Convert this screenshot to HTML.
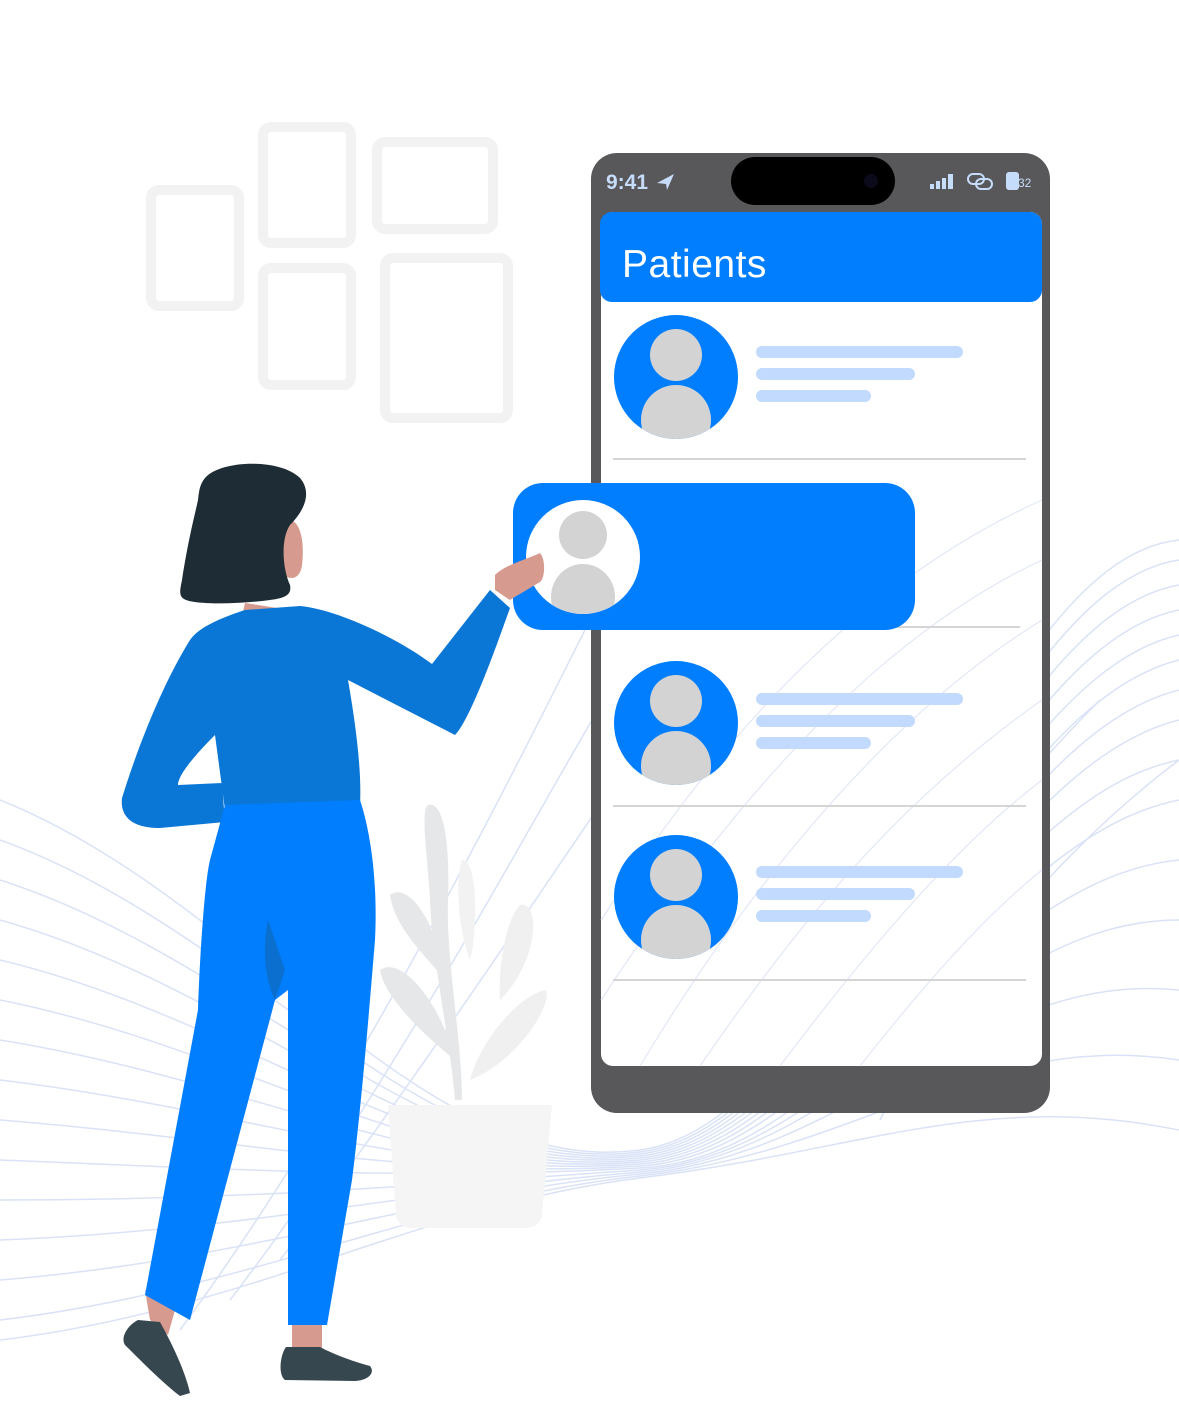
<!DOCTYPE html>
<html><head><meta charset="utf-8"><style>
html,body{margin:0;padding:0;background:#fff;width:1179px;height:1420px;overflow:hidden}
svg{display:block}
</style></head><body>
<svg width="1179" height="1420" viewBox="0 0 1179 1420" xmlns="http://www.w3.org/2000/svg">
<g fill="none" stroke="#f2f2f2" stroke-width="10">
<rect x="151" y="190" width="88" height="116" rx="8"/>
<rect x="263" y="127" width="88" height="116" rx="8"/>
<rect x="377" y="142" width="116" height="87" rx="8"/>
<rect x="263" y="268" width="88" height="117" rx="8"/>
<rect x="385" y="258" width="123" height="160" rx="8"/>
</g>
<g fill="none" stroke="#d3ddf5" stroke-width="1.5" opacity="0.85">
<path d="M0,800 C250,900 420,1180 640,1150 S980,560 1179,540"/>
<path d="M0,840 C250,930 420,1180 640,1152 S980,590 1179,560"/>
<path d="M0,880 C250,960 420,1180 640,1154 S980,620 1179,585"/>
<path d="M0,920 C250,990 420,1180 640,1156 S980,650 1179,610"/>
<path d="M0,960 C250,1020 420,1180 640,1158 S980,680 1179,635"/>
<path d="M0,1000 C250,1050 420,1180 640,1160 S980,710 1179,660"/>
<path d="M0,1040 C250,1080 420,1180 640,1162 S980,740 1179,690"/>
<path d="M0,1080 C250,1110 420,1180 640,1164 S980,770 1179,720"/>
<path d="M0,1120 C250,1140 420,1180 640,1166 S980,800 1179,760"/>
<path d="M0,1160 C250,1170 420,1180 640,1168 S980,840 1179,800"/>
<path d="M0,1200 C250,1200 420,1185 640,1170 S980,880 1179,860"/>
<path d="M0,1240 C250,1230 420,1190 640,1172 S980,920 1179,920"/>
<path d="M0,1280 C250,1260 420,1195 640,1174 S980,970 1179,990"/>
<path d="M0,1320 C250,1290 420,1200 640,1176 S980,1030 1179,1060"/>
<path d="M0,1340 C250,1310 420,1205 640,1178 S980,1090 1179,1130"/>
<path d="M180,1330 C350,1100 500,800 600,600"/>
<path d="M230,1300 C400,1080 540,800 640,640"/>
<path d="M280,1260 C440,1050 600,800 700,660"/>
<path d="M760,1080 C850,900 950,760 1050,660"/>
<path d="M820,1100 C900,930 1000,800 1100,700"/>
<path d="M880,1120 C950,980 1060,850 1179,760"/>
<path d="M700,1060 C800,880 900,720 1000,620"/>
<path d="M640,1040 C740,860 850,690 960,590"/>
</g>
<g fill="#e6e7e9">
<path d="M428,805 C445,800 450,850 448,900 C446,960 462,1040 462,1100 L455,1100 C450,1040 432,960 430,900 C428,860 420,810 428,805Z"/>
<path d="M390,895 C410,880 440,930 445,980 C430,960 395,930 390,895Z"/>
<path d="M380,970 C400,955 440,1000 455,1060 C430,1040 385,1000 380,970Z"/>
<path d="M520,905 C540,900 540,960 500,1000 C498,970 505,920 520,905Z" fill="#f0f0f1"/>
<path d="M545,990 C555,1000 520,1060 470,1080 C480,1040 520,995 545,990Z" fill="#f0f0f1"/>
<path d="M462,860 C478,860 478,930 470,960 C458,930 455,880 462,860Z" fill="#f2f2f2"/>
</g>
<path d="M388,1105 L552,1105 L542,1215 Q540,1228 525,1228 L412,1228 Q398,1228 396,1215Z" fill="#f5f5f5"/>
<rect x="591" y="153" width="459" height="960" rx="26" fill="#58585a"/>
<rect x="601" y="212" width="441" height="854" rx="12" fill="#fff"/>
<g fill="none" stroke="#dbe2f4" stroke-width="1.2" opacity="0.8">
<path d="M601,1000 C700,850 850,650 1042,560"/>
<path d="M640,1066 C740,900 880,720 1042,620"/>
<path d="M700,1066 C800,920 900,800 1042,700"/>
<path d="M780,1066 C860,960 950,850 1042,780"/>
<path d="M860,1066 C920,990 980,920 1042,870"/>
<path d="M601,920 C680,800 820,600 1042,500"/>
</g>
<rect x="731" y="157" width="164" height="48" rx="24" fill="#000"/>
<circle cx="871" cy="181" r="7" fill="#0a0a1a"/>
<text x="606" y="189" font-family="Liberation Sans, sans-serif" font-size="21" font-weight="bold" fill="#c6dcfb">9:41</text>
<path d="M657,183 L674,174 L667,190 L666,184Z" fill="#c6dcfb"/>
<g fill="#c6dcfb">
<rect x="930" y="184" width="4" height="5"/><rect x="936" y="181" width="4" height="8"/><rect x="942" y="178" width="4" height="11"/><rect x="948" y="174" width="5" height="15"/>
<rect x="1006" y="172" width="13" height="18" rx="3"/>
</g>
<g fill="none" stroke="#c6dcfb" stroke-width="2"><rect x="968" y="174" width="16" height="10" rx="5"/><rect x="976" y="179" width="16" height="10" rx="5"/></g>
<text x="1018" y="187" font-family="Liberation Sans, sans-serif" font-size="12" fill="#c6dcfb">32</text>
<rect x="600" y="212" width="442" height="90" rx="12" fill="#007efe"/>
<text x="622" y="277" font-family="Liberation Sans, sans-serif" font-size="39" fill="#fff" letter-spacing="0.5">Patients</text>
<defs>
<clipPath id="c1"><circle cx="676" cy="377" r="62"/></clipPath>
<clipPath id="c3"><circle cx="676" cy="723" r="62"/></clipPath>
<clipPath id="c4"><circle cx="676" cy="897" r="62"/></clipPath>
<clipPath id="c2"><circle cx="583" cy="557" r="57"/></clipPath>
</defs>
<circle cx="676" cy="377" r="62" fill="#007efe"/>
<g clip-path="url(#c1)" fill="#d3d3d3"><circle cx="676" cy="355" r="26"/><ellipse cx="676" cy="420" rx="35" ry="35"/></g>
<circle cx="676" cy="723" r="62" fill="#007efe"/>
<g clip-path="url(#c3)" fill="#d3d3d3"><circle cx="676" cy="701" r="26"/><ellipse cx="676" cy="766" rx="35" ry="35"/></g>
<circle cx="676" cy="897" r="62" fill="#007efe"/>
<g clip-path="url(#c4)" fill="#d3d3d3"><circle cx="676" cy="875" r="26"/><ellipse cx="676" cy="940" rx="35" ry="35"/></g>
<g fill="#c2dafe">
<rect x="756" y="346" width="207" height="12" rx="6"/><rect x="756" y="368" width="159" height="12" rx="6"/><rect x="756" y="390" width="115" height="12" rx="6"/>
<rect x="756" y="693" width="207" height="12" rx="6"/><rect x="756" y="715" width="159" height="12" rx="6"/><rect x="756" y="737" width="115" height="12" rx="6"/>
<rect x="756" y="866" width="207" height="12" rx="6"/><rect x="756" y="888" width="159" height="12" rx="6"/><rect x="756" y="910" width="115" height="12" rx="6"/>
</g>
<g stroke="#d5d5d5" stroke-width="2">
<line x1="613" y1="459" x2="1026" y2="459"/><line x1="613" y1="627" x2="1020" y2="627"/>
<line x1="613" y1="806" x2="1026" y2="806"/><line x1="613" y1="980" x2="1026" y2="980"/>
</g>
<rect x="513" y="483" width="402" height="147" rx="30" fill="#007efe"/>
<circle cx="583" cy="557" r="57" fill="#fff"/>
<g clip-path="url(#c2)" fill="#d3d3d3"><circle cx="583" cy="535" r="24"/><ellipse cx="583" cy="597" rx="32" ry="33"/></g>
<path d="M290,610 L245,603 L240,625 L290,625Z" fill="#d79a8e"/>
<path d="M283,520 C300,515 305,540 302,565 C300,580 290,580 283,575Z" fill="#d79a8e"/>
<path d="M205,478 C220,460 280,458 300,478 C312,492 305,510 290,525 C280,540 283,570 290,585 C292,595 285,598 270,600 C240,604 200,605 186,600 C178,597 180,590 182,580 C188,540 196,510 198,500 C199,490 200,484 205,478Z" fill="#1e2d35"/>
<path d="M495,575 C505,565 525,560 540,553 C546,560 545,578 540,582 C530,588 518,595 510,600 L495,590Z" fill="#d79a8e"/>
<path d="M145,1290 L175,1310 L168,1335 L150,1320Z" fill="#d79a8e"/>
<path d="M292,1320 L322,1320 L322,1350 L292,1352Z" fill="#d79a8e"/>
<path d="M190,640 C200,625 230,615 245,610 L300,606 C340,610 400,640 432,664 L490,590 L510,608 C495,650 470,720 455,735 L348,680 C355,720 362,770 360,805 L225,810 L215,735 C195,755 178,775 178,785 L222,783 L225,822 L160,828 C130,828 120,815 122,798 C140,740 165,680 190,640Z" fill="#0a77d6"/>
<path d="M225,805 L360,800 C370,830 378,880 375,940 C370,1000 362,1100 352,1180 L327,1325 L288,1325 L288,990 L275,1000 L190,1320 L145,1295 L198,1010 C200,950 205,880 210,860 Z" fill="#007efe"/>
<path d="M268,920 L285,970 L275,1000 C265,980 262,950 268,920Z" fill="#0a6fce"/>
<path d="M138,1320 L160,1322 C170,1340 185,1370 190,1393 L180,1396 C165,1385 140,1360 125,1345 C120,1337 128,1325 138,1320Z" fill="#37474f"/>
<path d="M286,1347 L320,1347 C335,1355 355,1362 370,1366 C375,1372 370,1380 355,1381 L285,1380 C278,1375 280,1355 286,1347Z" fill="#37474f"/>
</svg>
</body></html>
